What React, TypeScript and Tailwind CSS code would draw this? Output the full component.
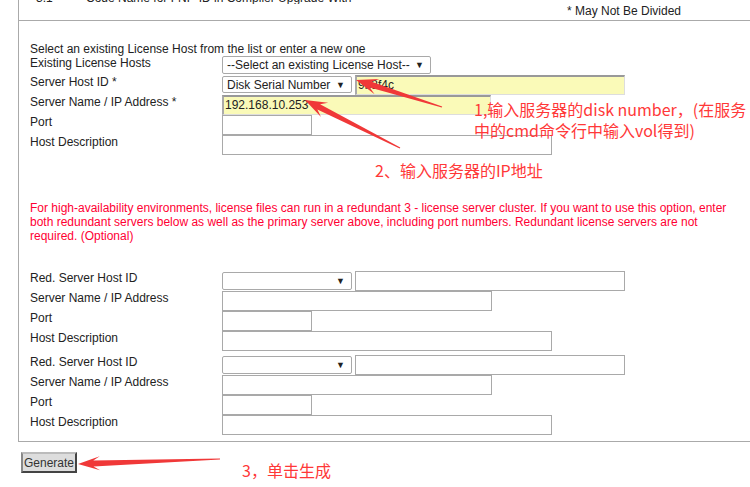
import React from "react";

type Pt = [number, number];

// tapered red arrow, like the ones drawn by a screenshot tool
function arrowPoints(tail: Pt, tip: Pt, L = 22, w1 = 3, w2 = 8) {
  const dx = tip[0] - tail[0];
  const dy = tip[1] - tail[1];
  const len = Math.hypot(dx, dy);
  const ux = dx / len;
  const uy = dy / len;
  const nx = -uy;
  const ny = ux;
  const b: Pt = [tip[0] - ux * L * 0.7, tip[1] - uy * L * 0.7];
  const h: Pt = [tip[0] - ux * L, tip[1] - uy * L];
  const pts: Pt[] = [
    [tail[0] + nx * 0.6, tail[1] + ny * 0.6],
    [b[0] + nx * w1, b[1] + ny * w1],
    [h[0] + nx * w2, h[1] + ny * w2],
    tip,
    [h[0] - nx * w2, h[1] - ny * w2],
    [b[0] - nx * w1, b[1] - ny * w1],
    [tail[0] - nx * 0.6, tail[1] - ny * 0.6],
  ];
  return pts.map((p) => `${p[0].toFixed(1)},${p[1].toFixed(1)}`).join(" ");
}

const Label = ({ children }: { children: React.ReactNode }) => (
  <div className="w-[192px] shrink-0 leading-[14px] text-[#222]">{children}</div>
);

const Select = ({ text, className }: { text?: string; className: string }) => (
  <div
    className={`flex items-center justify-between rounded-[2px] border border-[#a9a9a9] bg-white pl-[4px] pr-[6px] leading-[14px] text-[#222] ${className}`}
  >
    <span>{text}</span>
    <span className="text-[9px]">▼</span>
  </div>
);

const Input = ({ className, text }: { className: string; text?: string }) => (
  <div className={`h-5 border border-[#a9a9a9] bg-white ${className}`}>{text}</div>
);

const YellowInput = ({ className, text }: { className: string; text: string }) => (
  <div
    className={`h-5 border border-t-2 border-l-2 border-t-[#999] border-l-[#aaa] border-r-[#ddd] border-b-[#ddd] bg-[#fafab8] pl-[1px] leading-[16px] text-[#222] ${className}`}
  >
    {text}
  </div>
);

const RedGroup = () => (
  <div className="flex flex-col">
    <div className="flex h-5">
      <Label>Red. Server Host ID</Label>
      <Select className="mt-[1px] h-[18px] w-[130px]" />
      <Input className="ml-[3px] w-[270px]" />
    </div>
    <div className="flex h-5">
      <Label>Server Name / IP Address</Label>
      <Input className="w-[270px]" />
    </div>
    <div className="flex h-5">
      <Label>Port</Label>
      <Input className="w-[90px]" />
    </div>
    <div className="flex h-5">
      <Label>Host Description</Label>
      <Input className="w-[330px]" />
    </div>
  </div>
);

export default function App() {
  return (
    <div className="relative h-[487px] w-[750px] overflow-hidden bg-white font-['Liberation_Sans',Arial,sans-serif] text-[12px]">
      <div className="ml-[18px] w-[800px] border-b border-l border-[#aaa]">
        {/* tail of the table above */}
        <div className="h-[21px] border-b border-[#aaa]">
          <div className="h-[4px] overflow-hidden">
            <div className="-mt-[9px] flex leading-[14px] text-[#222]">
              <span className="ml-[17px] w-[50px]">3.1</span>
              <span>Code Name for FNP-ID in Compiler Upgrade With</span>
            </div>
          </div>
          <div className="pl-[548px] leading-[14px] text-[#222]">* May Not Be Divided</div>
        </div>

        <div className="pl-[11px] pb-[6px]">
          <div className="mt-[21px] leading-[14px] text-[#222]">
            Select an existing License Host from the list or enter a new one
          </div>

          <div className="flex h-[19px]">
            <Label>Existing License Hosts</Label>
            <Select text="--Select an existing License Host--" className="h-[18px] w-[209px]" />
          </div>
          <div className="flex h-5">
            <Label>Server Host ID *</Label>
            <Select text="Disk Serial Number" className="mt-[1px] h-[17px] w-[130px]" />
            <YellowInput className="ml-[3px] w-[270px]" text="9b3f4c" />
          </div>
          <div className="flex h-5">
            <Label>Server Name / IP Address *</Label>
            <YellowInput className="w-[269px]" text="192.168.10.253" />
          </div>
          <div className="flex h-5">
            <Label>Port</Label>
            <Input className="w-[90px]" />
          </div>
          <div className="flex h-5">
            <Label>Host Description</Label>
            <Input className="w-[330px]" />
          </div>

          <p className="mt-[46px] w-[712px] leading-[14px] text-[#ff0033]">
            For high-availability environments, license files can run in a redundant 3 - license server cluster. If you
            want to use this option, enter both redundant servers below as well as the primary server above, including
            port numbers. Redundant license servers are not required. (Optional)
          </p>

          <div className="mt-[28px]">
            <RedGroup />
          </div>
          <div className="mt-1">
            <RedGroup />
          </div>
        </div>
      </div>

      <button className="ml-[21px] mt-[10px] h-[21px] w-[56px] border-2 border-t-[#bbb] border-l-[#888] border-r-[#444] border-b-[#444] bg-[#ddd] px-0 text-[12px] leading-[14px] text-[#333]">
        Generate
      </button>

      {/* annotations drawn over the screenshot */}
      <svg className="pointer-events-none absolute left-0 top-0" width="750" height="487">
        <polygon points={arrowPoints([442, 107], [356, 80])} fill="#f03838" />
        <polygon points={arrowPoints([400, 148], [305, 100])} fill="#f03838" />
        <polygon points={arrowPoints([220, 459], [78, 464], 22, 3, 7)} fill="#f03838" />
      </svg>
      <div className="absolute left-[474px] top-[99px] font-['Noto_Sans_CJK_SC','Liberation_Sans',sans-serif] text-[16px] leading-[21px] text-[#ff3838]">
        <div>1,输入服务器的disk number，(在服务</div>
        <div>中的cmd命令行中输入vol得到)</div>
      </div>
      <div className="absolute left-[375px] top-[160px] font-['Noto_Sans_CJK_SC','Liberation_Sans',sans-serif] text-[16px] leading-[21px] text-[#ff3838]">
        2、输入服务器的IP地址
      </div>
      <div className="absolute left-[242px] top-[460px] font-['Noto_Sans_CJK_SC','Liberation_Sans',sans-serif] text-[16px] leading-[21px] text-[#ff3838]">
        3，单击生成
      </div>
    </div>
  );
}
